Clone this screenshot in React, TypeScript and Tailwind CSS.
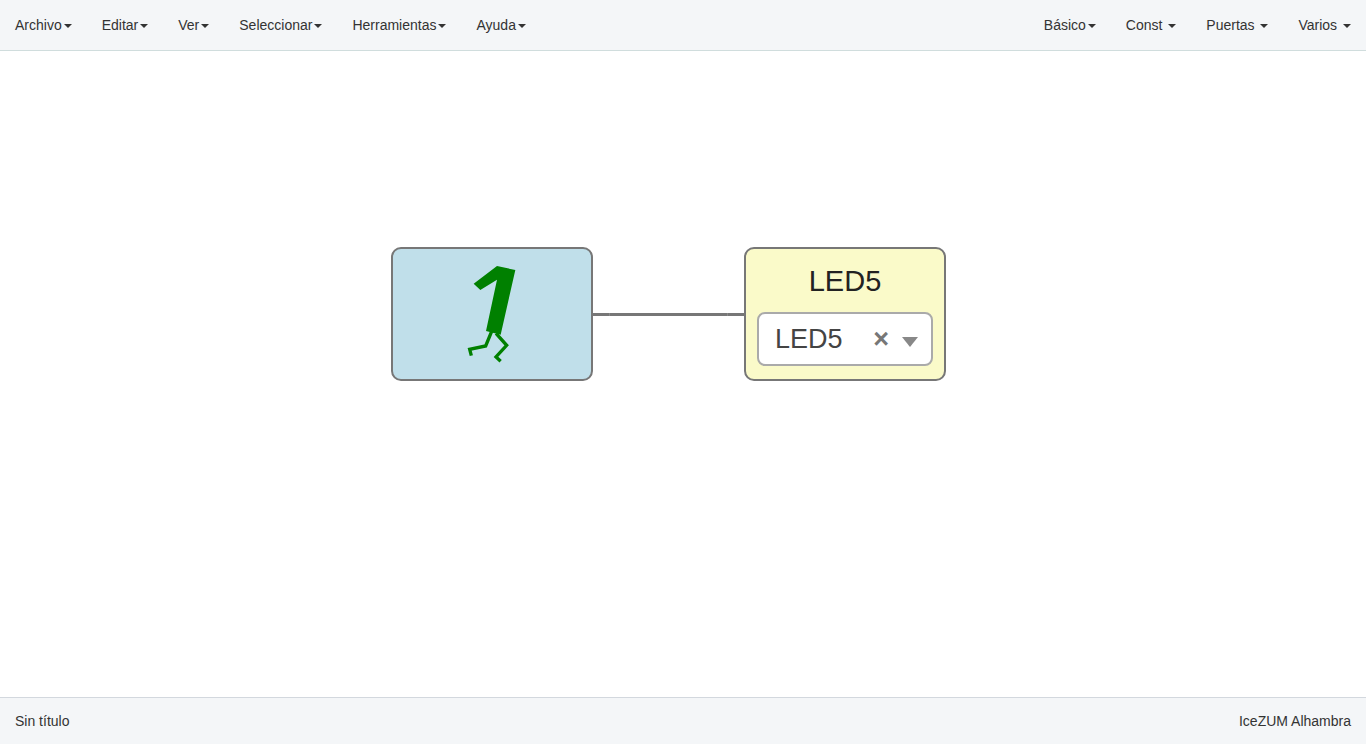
import { useState } from "react";

type MenuItem = { label: string; spaced?: boolean };

const mainMenu: MenuItem[] = [
  { label: "Archivo" },
  { label: "Editar" },
  { label: "Ver" },
  { label: "Seleccionar" },
  { label: "Herramientas" },
  { label: "Ayuda" },
];

const blockMenu: MenuItem[] = [
  { label: "Básico" },
  { label: "Const", spaced: true },
  { label: "Puertas", spaced: true },
  { label: "Varios", spaced: true },
];

function Menu({ items, label }: { items: MenuItem[]; label: string }) {
  return (
    <ul className="flex" aria-label={label}>
      {items.map((item) => (
        <li key={item.label}>
          <button
            type="button"
            aria-haspopup="menu"
            className="px-[15px] py-[15px] whitespace-pre leading-5"
          >
            {item.spaced ? item.label + " " : item.label}
            <span className="ml-[2px] inline-block border-x-4 border-t-4 border-x-transparent border-t-[#333] align-middle" />
          </button>
        </li>
      ))}
    </ul>
  );
}

function WalkingOne() {
  return (
    <svg viewBox="0 0 594 390" className="h-full w-full" role="img" aria-label="1">
      <g transform="translate(171 18)">
        <path d="M71 86 141 33 196 45 152 239 108 228 141 74 91 105Z" fill="#008000" />
        <path
          d="M125 229 107 273 59 283 64 302M138 235 170 271 138 306 152 319"
          fill="none"
          stroke="#008000"
          strokeWidth="10"
        />
      </g>
    </svg>
  );
}

function OutputBlock() {
  const [pin, setPin] = useState("LED5");
  return (
    <div className="absolute top-[196px] left-[744px] h-[134px] w-[202px] rounded-[10px] border-2 border-[#777] bg-[#fafac9] px-[11px]">
      <label htmlFor="pin" className="block pt-3 text-center text-[29px] leading-10 text-[#222]">
        LED5
      </label>
      <div className="relative mt-[11px]">
        <select
          id="pin"
          value={pin}
          onChange={(e) => setPin(e.target.value)}
          className="block h-[54px] w-full appearance-none rounded-lg border-2 border-[#aaa] bg-white pl-4 text-[27px] text-[#444]"
        >
          <option value=""></option>
          <option value="LED5">LED5</option>
        </select>
        <button
          type="button"
          aria-label="Borrar"
          onClick={() => setPin("")}
          className="absolute top-[11px] right-[44px] text-[27px] leading-8 font-bold text-[#777]"
        >
          ×
        </button>
        <svg viewBox="0 0 16 10" className="pointer-events-none absolute top-[25px] right-[15px] h-[10px] w-4">
          <path d="M0 0H16L8 10Z" fill="#888" />
        </svg>
      </div>
    </div>
  );
}

export default function App() {
  return (
    <div className="flex h-screen flex-col bg-white font-['Liberation_Sans',Arial,sans-serif] text-sm text-[#333]">
      <nav className="flex justify-between border-b border-[#d0dddd] bg-[#f4f6f8]">
        <Menu items={mainMenu} label="Principal" />
        <Menu items={blockMenu} label="Bloques" />
      </nav>

      <main className="relative flex-1 overflow-hidden">
        <svg viewBox="0 0 153 3" className="absolute top-[262px] left-[592px] h-[3px] w-[153px]">
          <path d="M0 0H153V3H0Z" fill="#777" />
          <path d="M17 0H18V3H17ZM135 0H136V3H135Z" fill="#8c8c8c" />
        </svg>
        <div className="absolute top-[196px] left-[391px] h-[134px] w-[202px] rounded-[10px] border-2 border-[#777] bg-[#c0dfea]">
          <WalkingOne />
        </div>
        <OutputBlock />
      </main>

      <footer className="flex justify-between border-t border-[#d3d8de] bg-[#f4f6f8] px-[15px] py-[13px] leading-5">
        <span>Sin título</span>
        <span>IceZUM Alhambra</span>
      </footer>
    </div>
  );
}
